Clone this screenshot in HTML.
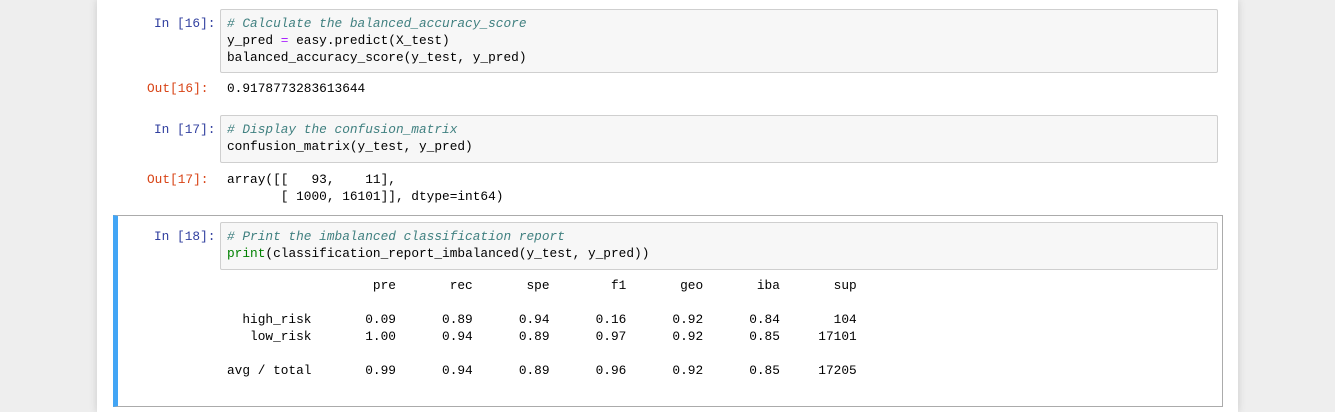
<!DOCTYPE html><html><head><style>
body{margin:0;background:#eeeeee;width:1335px;height:412px;overflow:hidden;font-family:"Liberation Mono",monospace;font-size:12.8px;}
.page{position:absolute;left:97px;top:0;width:1141px;height:412px;background:#fff;box-shadow:0 0 8px rgba(0,0,0,.15);}
.abs{position:absolute;white-space:pre;line-height:17px;}
.pin{color:#303F9F;}
.pout{color:#D84315;}
.box{position:absolute;background:#f7f7f7;border:1px solid #cfcfcf;border-radius:2px;}
.c{color:#408080;font-style:italic;}
.o{color:#AA22FF;}
.g{color:#008000;}
.sel{position:absolute;left:113px;top:215px;width:1110px;height:192px;border:1px solid #ababab;border-left:5px solid #42A5F5;box-sizing:border-box;}
</style></head><body>
<div class="page"></div>
<div class="box" style="left:220px;top:9px;width:996px;height:62px"></div>
<div class="abs pin" style="left:154px;top:15px">In [16]:</div>
<div class="abs" style="left:227px;top:15px"><span class="c"># Calculate the balanced_accuracy_score</span>
y_pred <span class="o">=</span> easy.predict(X_test)
balanced_accuracy_score(y_test, y_pred)</div>
<div class="abs pout" style="left:147px;top:80px">Out[16]:</div>
<div class="abs" style="left:227px;top:80px">0.9178773283613644</div>

<div class="box" style="left:220px;top:115px;width:996px;height:46px"></div>
<div class="abs pin" style="left:154px;top:121px">In [17]:</div>
<div class="abs" style="left:227px;top:121px"><span class="c"># Display the confusion_matrix</span>
confusion_matrix(y_test, y_pred)</div>
<div class="abs pout" style="left:147px;top:171px">Out[17]:</div>
<div class="abs" style="left:227px;top:171px">array([[   93,    11],
       [ 1000, 16101]], dtype=int64)</div>

<div class="sel"></div>
<div class="box" style="left:220px;top:222px;width:996px;height:46px"></div>
<div class="abs pin" style="left:154px;top:228px">In [18]:</div>
<div class="abs" style="left:227px;top:228px"><span class="c"># Print the imbalanced classification report</span>
<span class="g">print</span>(classification_report_imbalanced(y_test, y_pred))</div>
<div class="abs" style="left:227px;top:277px">                   pre       rec       spe        f1       geo       iba       sup

  high_risk       0.09      0.89      0.94      0.16      0.92      0.84       104
   low_risk       1.00      0.94      0.89      0.97      0.92      0.85     17101

avg / total       0.99      0.94      0.89      0.96      0.92      0.85     17205</div>
</body></html>
